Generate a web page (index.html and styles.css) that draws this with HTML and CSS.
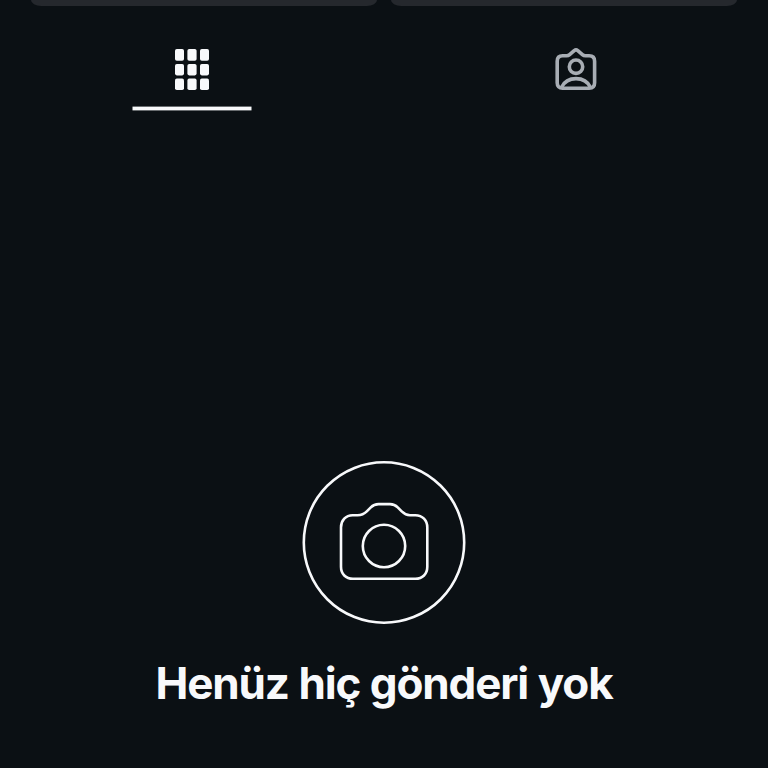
FILE: index.html
```
<!DOCTYPE html>
<html lang="tr">
<head>
<meta charset="utf-8">
<meta name="viewport" content="width=device-width, initial-scale=1">
<title>Profil</title>
<link rel="stylesheet" href="styles.css">
</head>
<body>
<div class="actions">
  <div class="action"></div>
  <div class="action"></div>
</div>
<nav class="tabs">
  <div class="tab tab-active">
    <svg class="tab-icon" viewBox="0 0 44 48" fill="currentColor">
      <rect x="5" y="4" width="9" height="11.7" rx="1.8"/><rect x="17.4" y="4" width="9.2" height="11.7" rx="1.8"/><rect x="30" y="4" width="9" height="11.7" rx="1.8"/>
      <rect x="5" y="19" width="9" height="11.4" rx="1.8"/><rect x="17.4" y="19" width="9.2" height="11.4" rx="1.8"/><rect x="30" y="19" width="9" height="11.4" rx="1.8"/>
      <rect x="5" y="33.6" width="9" height="11.4" rx="1.8"/><rect x="17.4" y="33.6" width="9.2" height="11.4" rx="1.8"/><rect x="30" y="33.6" width="9" height="11.4" rx="1.8"/>
    </svg>
    <svg class="underline" viewBox="0 0 120 6" fill="currentColor"><rect x="0.5" y="0.6" width="119" height="3.8"/></svg>
  </div>
  <div class="tab">
    <svg class="tab-icon" viewBox="0 0 44 48" fill="none" stroke="currentColor" stroke-width="3.6" stroke-linecap="round" stroke-linejoin="round">
      <path d="M8.6 10.8H12.5Q14.3 10.8 15.6 9.6L20.2 5.6Q22 4.2 23.8 5.6L28.4 9.6Q29.7 10.8 31.5 10.8H35.2Q40.6 10.8 40.6 16.2V37.8Q40.6 43.2 35.2 43.2H8.6Q3.2 43.2 3.2 37.8V16.2Q3.2 10.8 8.6 10.8Z"/>
      <circle cx="22" cy="21.7" r="6.7"/>
      <path d="M7.6 42.2C10.2 36.8 15.3 33.6 22 33.6S33.8 36.8 36.4 42.2"/>
    </svg>
  </div>
</nav>
<main class="empty">
  <svg class="camera" viewBox="0 0 164 164" fill="none" stroke="currentColor" stroke-width="2.6" stroke-linejoin="round">
    <circle cx="82" cy="81.5" r="80.2"/>
    <path d="M50.5 54.2H55.5Q61 54.2 64.8 50.4L68.8 46.4Q72 43.1 76.5 43.1H88Q92.5 43.1 95.7 46.4L99.7 50.4Q103.5 54.2 108 54.2H113.3C120.5 54.2 125.3 59.5 125.3 66.5V105.7C125.3 113 120.5 117.8 113.3 117.8H51C43.8 117.8 39 113 39 105.7V66.5C39 59.5 43.8 54.2 50.5 54.2Z"/>
    <circle cx="82" cy="85" r="21.2"/>
  </svg>
  <h1 class="title">Henüz hiç gönderi yok</h1>
</main>
</body>
</html>
```
FILE: styles.css
```
* { box-sizing: border-box; }
body {
  margin: 0;
  height: 768px;
  overflow: hidden;
  background: #0b1014;
  color: #f8f9fb;
  font-family: Inter, "Liberation Sans", sans-serif;
}
.actions {
  display: grid;
  grid-template-columns: 1fr 1fr;
  gap: 14px;
  height: 7px;
  padding: 0 31px;
}
.action {
  height: 6.4px;
  background: #25282d;
  border-radius: 0 0 12px 12px / 0 0 7px 7px;
}
.tabs {
  display: grid;
  grid-template-columns: 1fr 1fr;
  height: 104px;
  padding-top: 38px;
}
.tab {
  display: flex;
  flex-direction: column;
  align-items: center;
  color: #a8adb4;
}
.tab-active { color: #f8f9fb; }
.tab-icon { width: 44px; height: 48px; }
.underline {
  width: 120px;
  height: 6px;
  margin-top: 13px;
}
.empty {
  display: flex;
  flex-direction: column;
  align-items: center;
  padding-top: 350px;
}
.camera { width: 164px; height: 164px; }
.title {
  margin: 30px 0 0;
  font-size: 44px;
  line-height: 56px;
  font-weight: 650;
  letter-spacing: -1.15px;
  word-spacing: 0.4px;
  white-space: nowrap;
}
```
